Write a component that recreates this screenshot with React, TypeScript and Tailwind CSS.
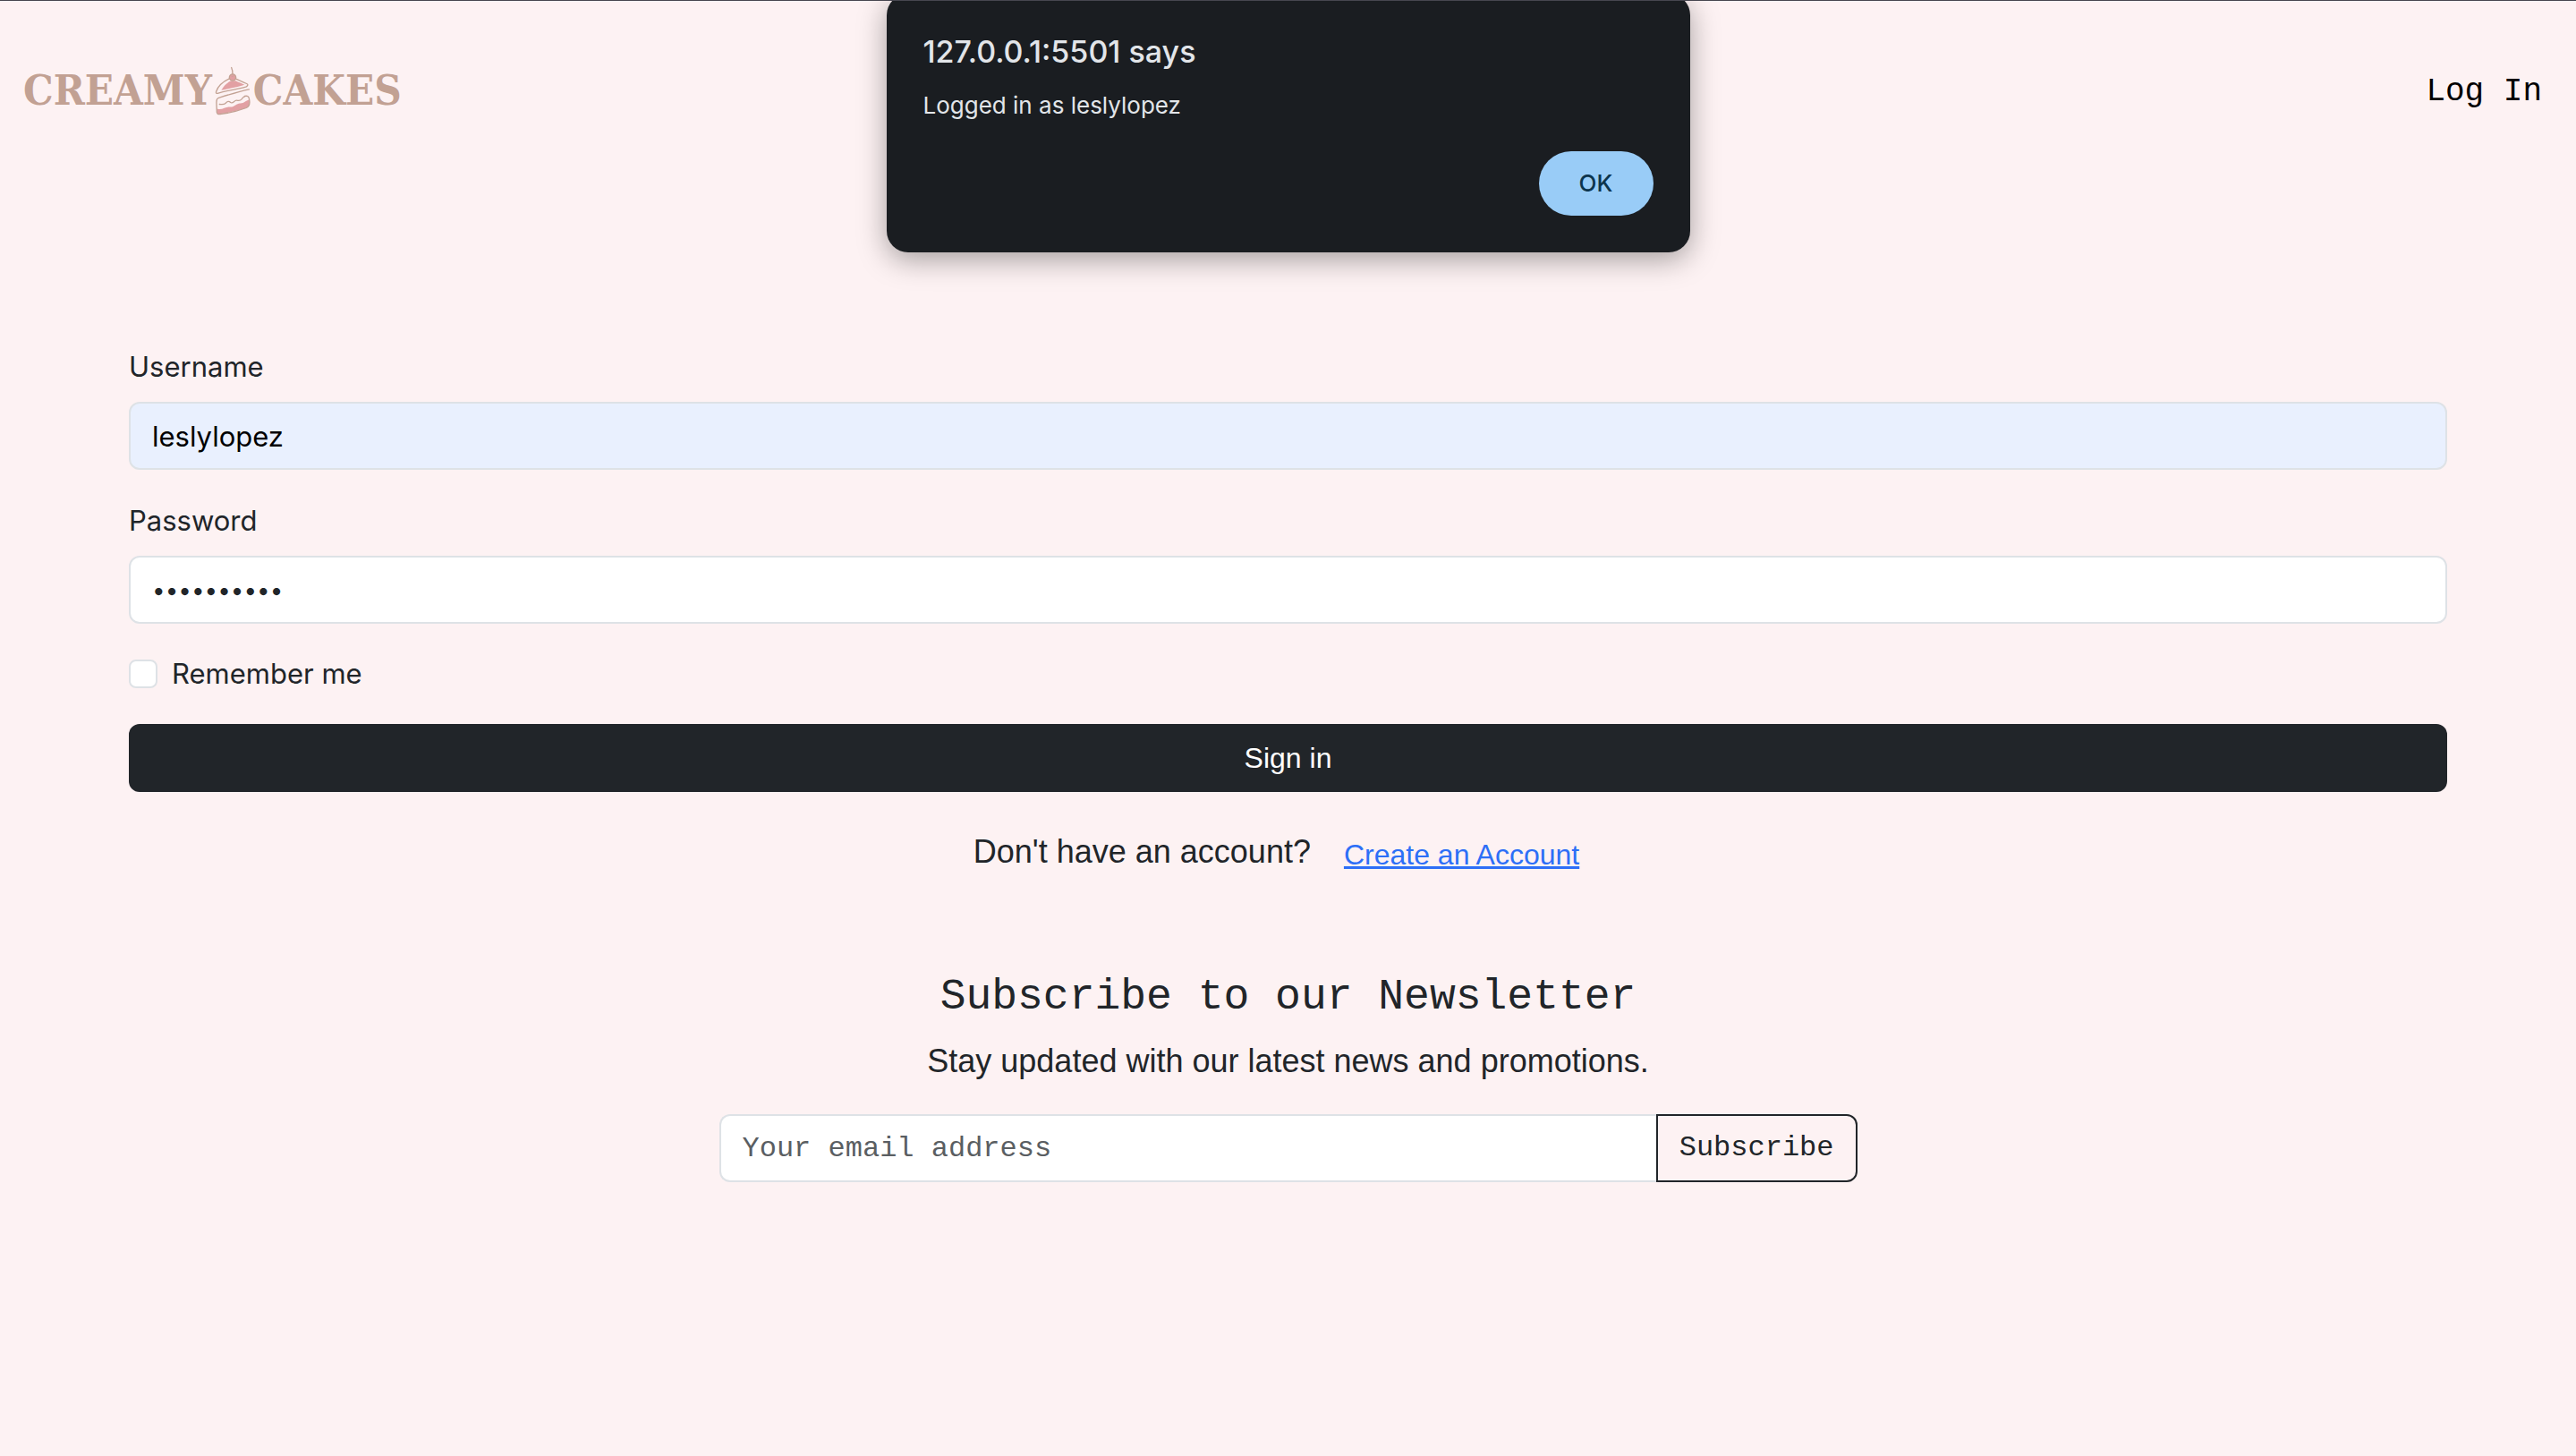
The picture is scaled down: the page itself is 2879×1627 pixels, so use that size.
import React from "react";

function CakeIcon() {
  return (
    <svg viewBox="720 66 120 164" className="mx-[3px] h-[55px] w-10 shrink-0" fill="none" strokeLinecap="round" strokeLinejoin="round" aria-hidden="true">
      <path d="M742 146 C750 131 762 120 773 115 L790 114 C800 119 812 123 820 128 C800 135 770 140 742 146 Z" fill="#e2a0a3" />
      <path d="M728 208 C744 214 756 200 770 202 C786 204 794 188 806 190 C818 190 824 180 836 178 C840 196 834 202 824 206 C800 214 770 222 734 225 C726 225 728 216 728 208 Z" fill="#e2a0a3" />
      <g stroke="#c3a294" strokeWidth="4">
        <path d="M769 107 C750 116 731 132 725 150 C723 156 726 158 732 156 C764 146 800 142 826 134 C832 130 832 126 827 124 C815 119 803 114 791 108" />
        <path d="M835 143 C802 150 764 162 732 172 C724 175 726 184 726 192 L727 220 C728 226 732 227 738 226 C768 223 802 214 826 205 C838 200 838 190 836 178 C835 166 830 164 820 166" />
        <path d="M736 193 C748 194 750 195 756 190 C762 182 768 182 773 187 C779 191 784 184 789 181 C796 177 802 186 810 176 C813 172 816 168 820 167" />
        <path d="M780 94 C780 84 779 76 776 70" />
        <circle cx="780" cy="103" r="11" fill="#e2a0a3" />
      </g>
      <path d="M776 99 q4 3 8 -1" stroke="#c3a294" strokeWidth="2" />
    </svg>
  );
}

function Header() {
  return (
    <header className="flex items-center justify-between py-[70px] pr-[38px] pl-[26px]">
      <a href="#home" aria-label="Creamy Cakes" className="flex items-center font-['DejaVu_Serif_Condensed','DejaVu_Serif',serif] text-[47px] leading-14 font-bold text-[#c2a193]">
        <span>CREAMY</span>
        <CakeIcon />
        <span>CAKES</span>
      </a>
      <nav>
        <a href="#login" className="block pt-1 font-['Liberation_Mono',monospace] text-4xl leading-14 text-black">
          Log In
        </a>
      </nav>
    </header>
  );
}

function AlertDialog() {
  return (
    <div
      role="alertdialog"
      aria-labelledby="alert-title"
      aria-describedby="alert-text"
      className="absolute -top-2 left-1/2 flex w-[898px] max-w-full -translate-x-1/2 flex-col rounded-3xl bg-[#1a1d21] px-[41px] pt-[45px] pb-[41px] text-[#e2e5e9] shadow-[0_8px_32px_rgba(0,0,0,0.35)]"
    >
      <h2 id="alert-title" className="text-[34px] leading-10 font-medium">127.0.0.1:5501 says</h2>
      <p id="alert-text" className="mt-5 text-[26px] leading-10">Logged in as leslylopez</p>
      <button type="button" className="mt-[31px] h-18 w-32 self-end rounded-full bg-[#99ccf7] text-[26px] font-medium text-[#0c344d]">
        OK
      </button>
    </div>
  );
}

const field = "mb-8 block h-[76px] w-full rounded-xl border-2 border-[#dee2e6] px-6";
const label = "mb-3.5 block leading-[50px]";

function LoginForm() {
  return (
    <form className="px-36 pt-[184px] text-[31px]">
      <label htmlFor="username" className={label}>Username</label>
      <input id="username" type="text" defaultValue="leslylopez" className={`${field} bg-[#e9f0fe] text-black`} />
      <label htmlFor="password" className={label}>Password</label>
      <input id="password" type="password" defaultValue="abcdefghij" className={`${field} bg-white text-[26px]`} />
      <div className="mb-8 flex items-center gap-4">
        <input id="remember" type="checkbox" className="size-8 appearance-none rounded-lg border-2 border-[#dee2e6] bg-white checked:bg-blue-600" />
        <label htmlFor="remember">Remember me</label>
      </div>
      <button type="submit" className="h-[76px] w-full rounded-xl bg-[#212529] font-['Liberation_Sans',sans-serif] text-[32px] text-white">
        Sign in
      </button>
      <div className="mt-8 flex items-start justify-center gap-[11px] font-['Liberation_Sans',sans-serif]">
        <p className="mt-2 text-4xl leading-[54px]">Don't have an account?</p>
        <a href="#signup" className="px-[26px] py-3.5 text-[32px] text-[#2d6ff7] underline">Create an Account</a>
      </div>
    </form>
  );
}

function Newsletter() {
  return (
    <section className="mx-auto w-full max-w-[1272px] pt-[92px] text-center">
      <h2 className="font-['Liberation_Mono',monospace] text-5xl leading-[58px]">Subscribe to our Newsletter</h2>
      <p className="mt-4 font-['Liberation_Sans',sans-serif] text-4xl leading-[54px]">
        Stay updated with our latest news and promotions.
      </p>
      <form className="mt-8 flex font-['Liberation_Mono',monospace]">
        <input
          type="email"
          aria-label="Your email address"
          placeholder="Your email address"
          className="h-[76px] min-w-0 flex-1 rounded-l-xl border-2 border-r-0 border-[#dee2e6] bg-white px-6 placeholder:text-[#5a5e62]"
        />
        <button type="submit" className="h-[76px] rounded-r-xl border-2 border-[#212529] px-6">
          Subscribe
        </button>
      </form>
    </section>
  );
}

export default function App() {
  return (
    <div className="relative min-h-screen overflow-hidden border-t border-[#474650] bg-[#fdf2f3] font-['Inter',sans-serif] text-[32px] leading-12 text-[#212529]">
      <Header />
      <main>
        <LoginForm />
        <Newsletter />
      </main>
      <AlertDialog />
    </div>
  );
}
